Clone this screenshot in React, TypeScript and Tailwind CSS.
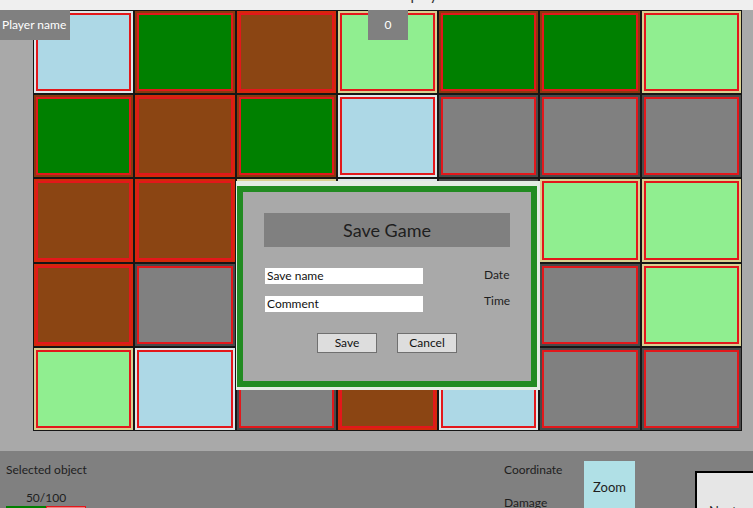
import React from 'react';

type Tile = 'lb' | 'g' | 'b' | 'lg' | 'gr';

// fill + the thin margin colour that shows between the grid line and the red frame
const tileStyles: Record<Tile, { margin: string; fill: string }> = {
  lb: { margin: 'bg-[#dfe6e8]', fill: 'bg-[#add8e6]' },
  g: { margin: 'bg-[#8b3a0f]', fill: 'bg-[#008000]' },
  b: { margin: 'bg-[#d22a0a]', fill: 'bg-[#8b4513]' },
  lg: { margin: 'bg-[#d9cf8f]', fill: 'bg-[#90ee90]' },
  gr: { margin: 'bg-[#4a4a4a]', fill: 'bg-[#808080]' },
};

const board: Tile[][] = [
  ['lb', 'g', 'b', 'lg', 'g', 'g', 'lg'],
  ['g', 'b', 'g', 'lb', 'gr', 'gr', 'gr'],
  ['b', 'b', 'lg', 'lb', 'gr', 'lg', 'lg'],
  ['b', 'gr', 'lb', 'g', 'b', 'gr', 'lg'],
  ['lg', 'lb', 'gr', 'b', 'lb', 'gr', 'gr'],
];

const Cell = ({ tile }: { tile: Tile }) => {
  const s = tileStyles[tile];
  return (
    <div className={`border border-[#161616] p-[2px] ${s.margin}`}>
      <div className={`h-full w-full border-2 border-[#e3171b] ${s.fill}`} />
    </div>
  );
};

const SaveDialog = () => (
  <div className="absolute left-[236px] top-[171px] w-[304px] h-[209px] bg-[#e4ece4] pl-px pt-[5px] pr-[3px] pb-[3px]">
    <div className="h-full w-full border-[6px] border-[#228b22] bg-[#a9a9a9] px-[21px] pt-[21px]">
      <div className="h-[34px] w-[246px] bg-[#808080] flex items-center justify-center text-[18px] text-[#1e1e1e]">
        Save Game
      </div>

      <div className="mt-[21px] flex">
        <div className="flex flex-col gap-[12px] pl-px">
          <div className="h-[16px] w-[158px] bg-white pl-[2px] text-[12px] leading-[16px] text-[#111]">
            Save name
          </div>
          <div className="h-[16px] w-[158px] bg-white pl-[2px] text-[12px] leading-[16px] text-[#111]">
            Comment
          </div>
        </div>
        <div className="ml-[61px] flex flex-col gap-[10px] -mt-[1px] text-[12px] leading-[16px] text-[#1e1e1e]">
          <span>Date</span>
          <span>Time</span>
        </div>
      </div>

      <div className="mt-[21px] flex gap-[20px] pl-[53px]">
        <button className="h-[20px] w-[60px] border border-[#707070] bg-[#dddddd] text-[12px] leading-[18px] text-[#111]">
          Save
        </button>
        <button className="h-[20px] w-[60px] border border-[#707070] bg-[#dddddd] text-[12px] leading-[18px] text-[#111]">
          Cancel
        </button>
      </div>
    </div>
  </div>
);

const App = () => {
  return (
    <div
      className="w-[753px] h-[508px] overflow-hidden flex flex-col bg-[#a9a9a9]"
      style={{ fontFamily: 'Lato, "Liberation Sans", sans-serif' }}
    >
      {/* window title strip, mostly cut off */}
      <div className="h-[10px] shrink-0 bg-[#efefef] relative overflow-hidden">
        <span className="absolute left-[372px] -top-[16px] text-[15px] leading-[20px] text-[#333]">
          Gameplay
        </span>
      </div>

      {/* board area */}
      <div className="relative h-[441px] shrink-0 pl-[33px]">
        <div className="grid grid-cols-7 grid-rows-5 w-[709px] h-[421px]">
          {board.flat().map((t, i) => (
            <Cell key={i} tile={t} />
          ))}
        </div>

        <div className="absolute left-0 top-0 h-[30px] w-[70px] bg-[#808080] flex items-center pl-[2px] text-[12px] text-white">
          Player name
        </div>
        <div className="absolute left-[368px] top-0 h-[30px] w-[40px] bg-[#808080] flex items-center justify-center text-[12px] text-white">
          0
        </div>

        <SaveDialog />
      </div>

      {/* status panel */}
      <div className="flex-1 min-h-0 overflow-hidden bg-[#808080] flex text-[12px] leading-[16px] text-[#1e1e1e]">
        <div className="w-[504px] shrink-0 pl-[6px] pt-[11px] flex flex-col">
          <span>Selected object</span>
          <div className="mt-[12px] w-[80px] flex flex-col items-center">
            <span>50/100</span>
            <div className="flex h-[6px] w-[80px]">
              <div className="w-[40px] bg-[#008000]" />
              <div className="w-[40px] border border-[#e3171b] bg-[#f08080]" />
            </div>
          </div>
        </div>

        <div className="w-[80px] shrink-0 pt-[11px] flex flex-col gap-[17px]">
          <span>Coordinate</span>
          <span>Damage</span>
        </div>

        <div className="mt-[10px] h-[52px] w-[51px] shrink-0 bg-[#b0e0e6] flex items-center justify-center text-[13px]">
          Zoom
        </div>

        <div className="ml-[60px] mt-[20px] h-[60px] w-[70px] shrink-0 border-2 border-black bg-[#e6e6e6] pl-[12px] pt-[30px] text-[13px]">
          Next
        </div>
      </div>
    </div>
  );
};

export default App;
